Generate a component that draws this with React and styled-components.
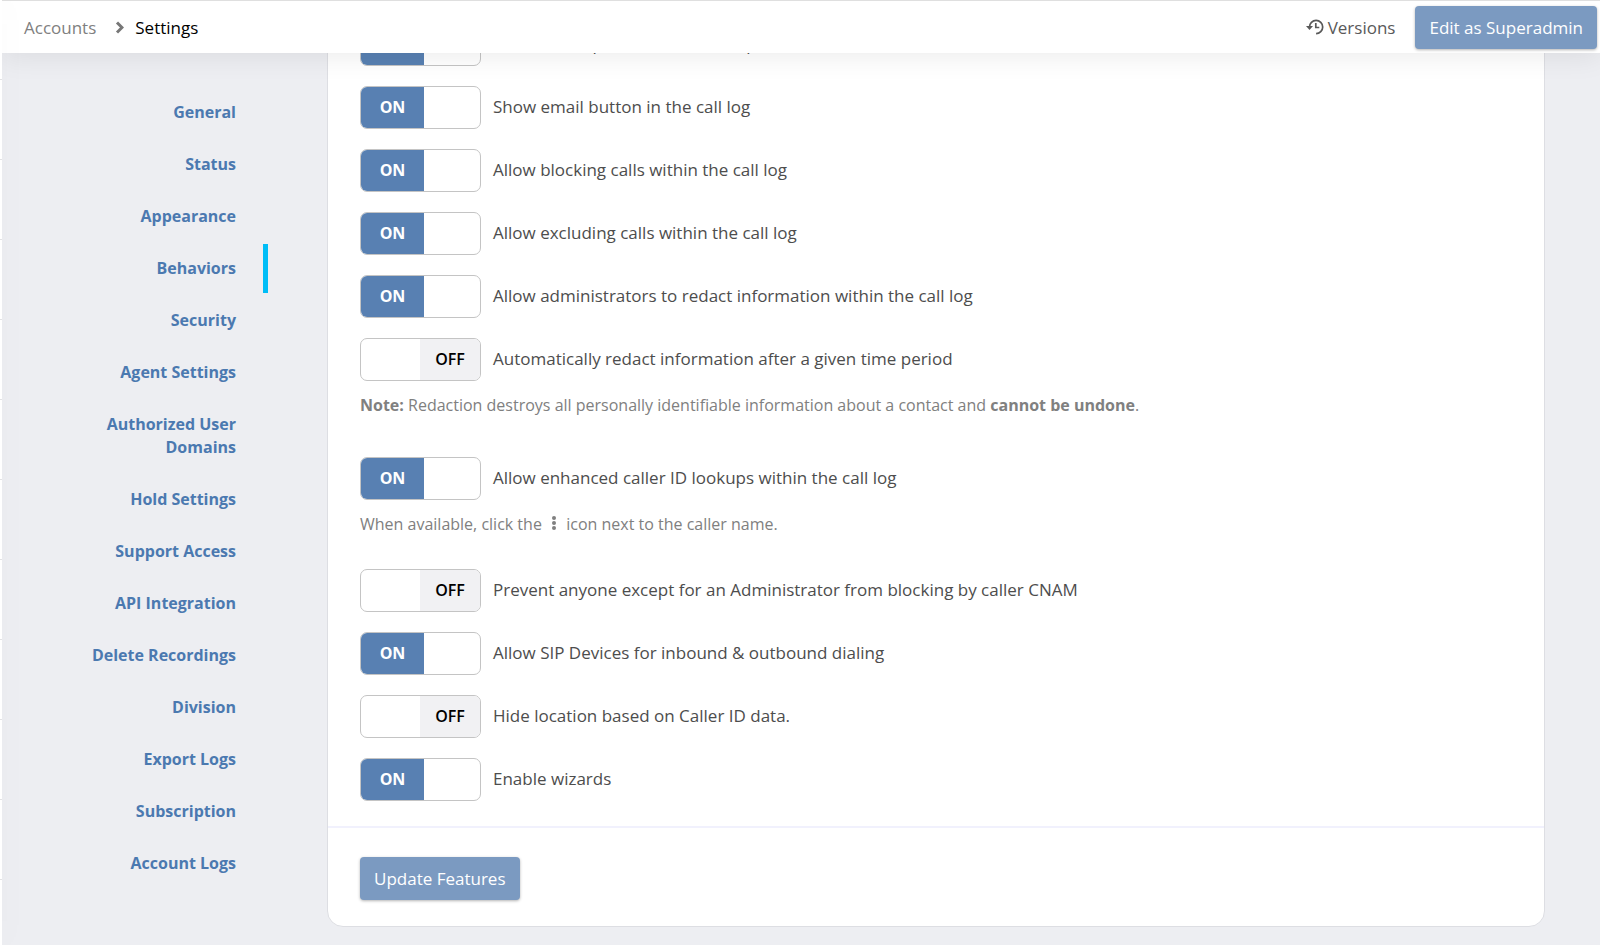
import { useState } from 'react';
import styled, { createGlobalStyle } from 'styled-components';

const GlobalStyle = createGlobalStyle`
  *, *::before, *::after {
    box-sizing: border-box;
  }

  body {
    margin: 0;
    background-color: #edeef2;
    font-family: 'Open Sans', sans-serif;
    font-size: 17px;
    line-height: 23px;
    color: #4d4d4d;
  }

  button {
    font: inherit;
  }
`;

const Page = styled.div`
  display: flex;
  min-height: 100vh;
`;

const Rail = styled.div`
  position: relative;
  z-index: 3;
  flex: none;
  width: 2px;
  background: repeating-linear-gradient(#fff 0 79px, #e2e2e4 79px 80px);
  box-shadow: 0 0 28px rgba(0, 0, 0, 0.14);
`;

const Content = styled.div`
  flex: 1;
  min-width: 0;
`;

const Header = styled.header`
  position: sticky;
  top: 0;
  z-index: 2;
  display: flex;
  align-items: center;
  justify-content: space-between;
  height: 53px;
  padding: 0 3px 0 22px;
  background-color: #fff;
  border-top: 1px solid #dfdfdf;
  box-shadow: 0 4px 28px rgba(0, 0, 0, 0.08);
`;

const Breadcrumb = styled.nav`
  display: flex;
  align-items: center;
  gap: 11px;
  color: #000;

  svg {
    display: block;
    margin-left: 8px;
  }
`;

const CrumbLink = styled.a`
  color: #808080;
  text-decoration: none;
`;

const Actions = styled.div`
  display: flex;
  align-items: center;
  gap: 20px;
`;

const VersionsLink = styled.a`
  display: flex;
  align-items: center;
  gap: 4px;
  color: #595959;
  text-decoration: none;
`;

const Button = styled.button`
  height: 43px;
  padding: 0 14px;
  border: 0;
  border-radius: 4px;
  background-color: #7b9ac1;
  color: #fff;
  box-shadow: 0 1px 3px rgba(0, 0, 0, 0.3);
  cursor: pointer;
`;

const Body = styled.div`
  display: flex;
  align-items: flex-start;
`;

const Sidebar = styled.nav`
  flex: none;
  width: 325px;
  padding: 35px 59px 0 80px;
`;

const SideList = styled.ul`
  display: flex;
  flex-direction: column;
  gap: 3px;
  list-style: none;
  margin: 0;
  padding: 0;
`;

const SideLink = styled.a`
  display: block;
  padding: 13px 27px 13px 0;
  border-right: 5px solid ${({ $active }) => ($active ? '#00bdf7' : 'transparent')};
  font-size: 16px;
  font-weight: 700;
  text-align: right;
  text-decoration: none;
  color: #4b79b0;
`;

const Card = styled.main`
  flex: 1;
  min-width: 0;
  margin: -61px 55px 18px 0;
  background-color: #fff;
  border: 1px solid #dddee3;
  border-radius: 16px;
`;

const Features = styled.div`
  display: flex;
  flex-direction: column;
  gap: 20px;
  padding: 30px 32px 25px;
`;

const FeatureLabel = styled.label`
  display: flex;
  align-items: center;
  gap: 12px;
  width: fit-content;
  cursor: pointer;
`;

const FeatureText = styled.span`
  padding-bottom: 2px;
`;

const HiddenCheckbox = styled.input`
  position: absolute;
  width: 1px;
  height: 1px;
  margin: 0;
  opacity: 0;
`;

const Track = styled.span`
  display: flex;
  justify-content: ${({ $on }) => ($on ? 'flex-start' : 'flex-end')};
  width: 121px;
  height: 43px;
  border: 1px solid #c4c4c4;
  border-radius: 7px;
  background-color: #fff;
  overflow: hidden;
`;

const TrackText = styled.span`
  display: flex;
  align-items: center;
  justify-content: center;
  width: ${({ $on }) => ($on ? '63px' : '60px')};
  background-color: ${({ $on }) => ($on ? '#5880b2' : '#f1f1f3')};
  color: ${({ $on }) => ($on ? '#fff' : '#000')};
  font-size: 16px;
  font-weight: ${({ $on }) => ($on ? 700 : 600)};
`;

const Note = styled.p`
  margin: 13px 0 ${({ $spaced }) => ($spaced ? '20px' : '13px')};
  font-size: 16px;
  color: #808080;
`;

const DotsIcon = styled.svg`
  margin: 0 5px;
`;

const CardFooter = styled.footer`
  padding: 29px 32px 26px;
  border-top: 2px solid #f1f1fd;
`;

const sections = [
  'General',
  'Status',
  'Appearance',
  'Behaviors',
  'Security',
  'Agent Settings',
  'Authorized User Domains',
  'Hold Settings',
  'Support Access',
  'API Integration',
  'Delete Recordings',
  'Division',
  'Export Logs',
  'Subscription',
  'Account Logs',
];

const features = [
  { label: 'Enable auto-pause when a user parks', on: true },
  { label: 'Show email button in the call log', on: true },
  { label: 'Allow blocking calls within the call log', on: true },
  { label: 'Allow excluding calls within the call log', on: true },
  { label: 'Allow administrators to redact information within the call log', on: true },
  {
    label: 'Automatically redact information after a given time period',
    on: false,
    spaced: true,
    note: (
      <>
        <strong>Note:</strong> Redaction destroys all personally identifiable information about a contact
        and <strong>cannot be undone</strong>.
      </>
    ),
  },
  {
    label: 'Allow enhanced caller ID lookups within the call log',
    on: true,
    note: (
      <>
        When available, click the{' '}
        <DotsIcon width="6" height="15" viewBox="0 0 6 15" fill="currentColor" aria-hidden="true">
          <circle cx="3" cy="3" r="2" />
          <circle cx="3" cy="8" r="2" />
          <circle cx="3" cy="13" r="2" />
        </DotsIcon>{' '}
        icon next to the caller name.
      </>
    ),
  },
  { label: 'Prevent anyone except for an Administrator from blocking by caller CNAM', on: false },
  { label: 'Allow SIP Devices for inbound & outbound dialing', on: true },
  { label: 'Hide location based on Caller ID data.', on: false },
  { label: 'Enable wizards', on: true },
];

function Feature({ label, on, note, spaced }) {
  const [checked, setChecked] = useState(on);

  return (
    <div>
      <FeatureLabel>
        <HiddenCheckbox type="checkbox" checked={checked} onChange={() => setChecked(!checked)} />
        <Track $on={checked}>
          <TrackText $on={checked}>{checked ? 'ON' : 'OFF'}</TrackText>
        </Track>
        <FeatureText>{label}</FeatureText>
      </FeatureLabel>
      {note && <Note $spaced={spaced}>{note}</Note>}
    </div>
  );
}

function App() {
  return (
    <>
      <GlobalStyle />
      <Page>
        <Rail />
        <Content>
          <Header>
            <Breadcrumb>
              <CrumbLink href="#accounts">Accounts</CrumbLink>
              <svg width="9" height="13" viewBox="0 0 9 13" fill="none" stroke="#777" strokeWidth="3">
                <path d="M2 1.500l5 5-5 5" />
              </svg>
              <span>Settings</span>
            </Breadcrumb>
            <Actions>
              <VersionsLink href="#versions">
                <svg width="18" height="16" viewBox="0 0 18 16" fill="none" stroke="currentColor" strokeWidth="1.700">
                  <path d="M3.500 8a6.600 6.600 0 1 1 6.600 6.600" />
                  <path d="M9.800 4v4.500h3.500" />
                  <path d="M0 7h7L3.500 11z" fill="currentColor" stroke="none" />
                </svg>
                Versions
              </VersionsLink>
              <Button type="button">Edit as Superadmin</Button>
            </Actions>
          </Header>
          <Body>
            <Sidebar>
              <SideList>
                {sections.map((name) => (
                  <li key={name}>
                    <SideLink href="#section" $active={name === 'Behaviors'}>{name}</SideLink>
                  </li>
                ))}
              </SideList>
            </Sidebar>
            <Card>
              <Features>
                {features.map((feature) => (
                  <Feature key={feature.label} {...feature} />
                ))}
              </Features>
              <CardFooter>
                <Button type="button">Update Features</Button>
              </CardFooter>
            </Card>
          </Body>
        </Content>
      </Page>
    </>
  );
}

export default App;
